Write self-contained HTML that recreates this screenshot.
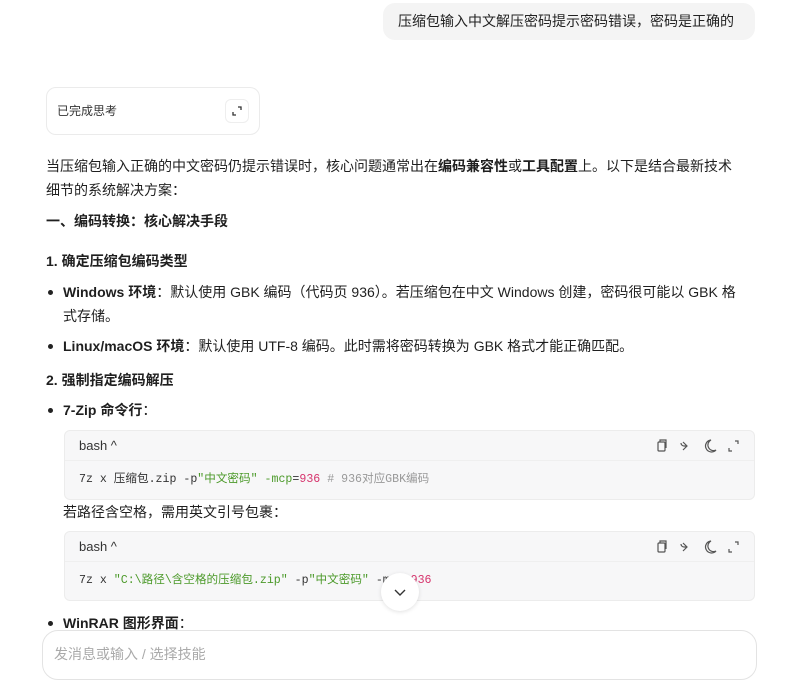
<!DOCTYPE html>
<html><head><meta charset="utf-8"><style>
*{margin:0;padding:0;box-sizing:border-box}
body{width:800px;height:662px;overflow:hidden;background:#fff;font-family:"Liberation Sans","Noto Sans CJK SC",sans-serif;color:#1f1f1f;position:relative;font-size:14px}
.a{position:absolute;white-space:nowrap;line-height:20px}
b{font-weight:700}
.bubble{position:absolute;left:383px;top:3px;width:372px;height:37px;background:#f4f4f4;border-radius:12px;font-size:14px;line-height:37px;padding-left:15px;color:#222}
.think{position:absolute;left:46px;top:87px;width:214px;height:48px;border:1px solid #ebebeb;border-radius:10px}
.ib{position:absolute;left:178px;top:11px;width:24px;height:24px;border:1px solid #eee;border-radius:6px}
.dot{position:absolute;width:5px;height:5px;border-radius:50%;background:#222}
.code{position:absolute;left:64px;width:691px;height:70px;background:#f7f7f8;border:1px solid #ececec;border-radius:6px}
.code .h{height:30px;border-bottom:1px solid #efefef;font-size:13px;line-height:30px;padding-left:14px;color:#333}
.code .c{font-family:"Liberation Mono","Noto Sans CJK SC",monospace;font-size:11.6px;padding-left:14px;line-height:38px;color:#333}
.g{color:#4c9a2a}.m{color:#d6336c}.cm{color:#999}
.icons{position:absolute;left:590px;top:7px}
.input{position:absolute;left:42px;top:630px;width:715px;height:50px;border:1px solid #e3e3e3;border-radius:16px;background:#fff}
</style></head><body>
<div class="bubble">压缩包输入中文解压密码提示密码错误，密码是正确的</div>
<div class="think"><div class="a" style="left:10px;top:13px;font-size:12px;color:#333">已完成思考</div>
<div class="ib"><svg width="22" height="22" viewBox="0 0 22 22" fill="none" stroke="#333" stroke-width="1.3"><path d="M12 7h3v3M7 12v3h3"/></svg></div></div>
<div class="a" style="left:46px;top:156px">当压缩包输入正确的中文密码仍提示错误时，核心问题通常出在<b>编码兼容性</b>或<b>工具配置</b>上。以下是结合最新技术</div>
<div class="a" style="left:46px;top:180px">细节的系统解决方案：</div>
<div class="a" style="left:46px;top:211px"><b>一、编码转换：核心解决手段</b></div>
<div class="a" style="left:46px;top:251px;font-size:14px"><b>1. 确定压缩包编码类型</b></div>
<div class="dot" style="left:48px;top:290px"></div>
<div class="a" style="left:63px;top:282px"><b>Windows 环境</b>：默认使用 GBK 编码（代码页 936）。若压缩包在中文 Windows 创建，密码很可能以 GBK 格</div>
<div class="a" style="left:63px;top:306px">式存储。</div>
<div class="dot" style="left:48px;top:344px"></div>
<div class="a" style="left:63px;top:336px"><b>Linux/macOS 环境</b>：默认使用 UTF-8 编码。此时需将密码转换为 GBK 格式才能正确匹配。</div>
<div class="a" style="left:46px;top:370px;font-size:14px"><b>2. 强制指定编码解压</b></div>
<div class="dot" style="left:48px;top:408px"></div>
<div class="a" style="left:63px;top:400px"><b>7-Zip 命令行</b>：</div>
<div class="code" style="top:430px"><div class="h">bash ^</div>
<div class="icons"><svg width="94" height="16" viewBox="0 0 94 16" fill="none" stroke="#555" stroke-width="1.2"><rect x="3" y="4" width="7" height="9" rx="1"/><path d="M5 4V2h6v8"/><path d="M28 4l4 4-4 4M32 8h-3a3 3 0 0 1-3-3"/><path d="M56 2a6 6 0 1 0 5 10a5 5 0 0 1-5-10z"/><path d="M80 3h3v3M77 13h-3v-3"/></svg></div>
<div class="c">7z x 压缩包.zip -p<span class="g">"中文密码"</span> <span class="g">-mcp</span>=<span class="m">936</span>  <span class="cm"># 936对应GBK编码</span></div></div>
<div class="a" style="left:63px;top:502px">若路径含空格，需用英文引号包裹：</div>
<div class="code" style="top:531px"><div class="h">bash ^</div>
<div class="icons"><svg width="94" height="16" viewBox="0 0 94 16" fill="none" stroke="#555" stroke-width="1.2"><rect x="3" y="4" width="7" height="9" rx="1"/><path d="M5 4V2h6v8"/><path d="M28 4l4 4-4 4M32 8h-3a3 3 0 0 1-3-3"/><path d="M56 2a6 6 0 1 0 5 10a5 5 0 0 1-5-10z"/><path d="M80 3h3v3M77 13h-3v-3"/></svg></div>
<div class="c">7z x <span class="g">"C:\路径\含空格的压缩包.zip"</span> -p<span class="g">"中文密码"</span> -mcp=<span class="m">936</span></div></div>
<div style="position:absolute;left:381px;top:573px;width:38px;height:38px;border-radius:50%;background:#fff;box-shadow:0 1px 4px rgba(0,0,0,0.12)"><svg width="38" height="38" viewBox="0 0 38 38" fill="none" stroke="#333" stroke-width="1.4"><path d="M14 17l5 5 5-5"/></svg></div>
<div class="dot" style="left:48px;top:621px"></div>
<div class="a" style="left:63px;top:613px"><b>WinRAR 图形界面</b>：</div>
<div class="input"><div class="a" style="left:11px;top:13px;color:#aaa;font-size:14px">发消息或输入 / 选择技能</div></div>
</body></html>
